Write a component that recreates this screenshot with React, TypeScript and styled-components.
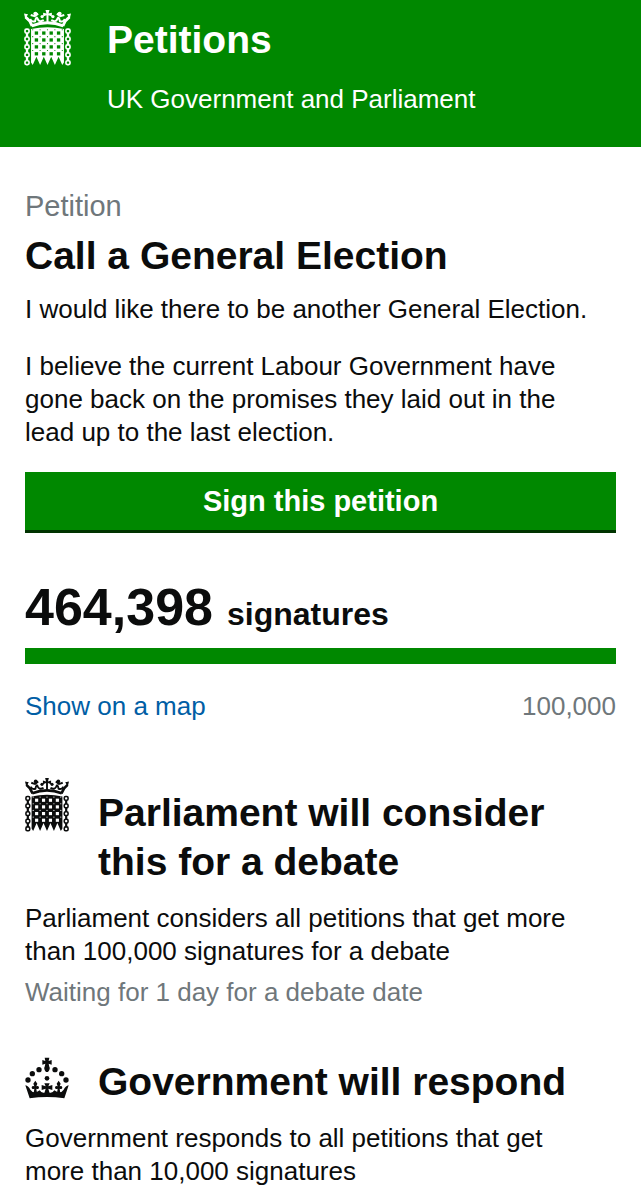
import React from "react";
import styled, { createGlobalStyle } from "styled-components";

const GlobalStyle = createGlobalStyle`
  * {
    box-sizing: border-box;
  }

  body {
    margin: 0;
    background: #fff;
    color: #0b0c0c;
    font-family: "Liberation Sans", Arial, sans-serif;
    font-size: 26px;
    line-height: 33px;
  }

  h1, h2, p {
    margin: 0;
  }
`;

const Header = styled.header`
  display: flex;
  gap: 36px;
  padding: 10px 24px 31px;
  background: #008800;
  color: #fff;
`;

const HeaderTitle = styled.p`
  font-size: 39px;
  font-weight: bold;
  line-height: 60px;
`;

const HeaderSubtitle = styled.p`
  padding-top: 13px;
`;

const Main = styled.main`
  padding: 40px 25px 16px;
`;

const Kicker = styled.p`
  color: #6f777b;
  font-size: 29px;
  line-height: 38px;
`;

const PageTitle = styled.h1`
  font-size: 39px;
  line-height: 62px;
`;

const Text = styled.p<{ $gap?: number }>`
  padding-top: ${({ $gap = 0 }) => $gap}px;
  padding-right: 24px;
`;

const SignButton = styled.button`
  display: block;
  width: 100%;
  margin-top: 23px;
  padding: 12px;
  border: 0;
  border-bottom: 3px solid #003300;
  background: #008800;
  color: #fff;
  font: bold 29px/34px "Liberation Sans", Arial, sans-serif;
  cursor: pointer;
`;

const Count = styled.p`
  padding-top: 43px;
  font-size: 52px;
  font-weight: bold;
  line-height: 62px;
`;

const CountUnit = styled.span`
  margin-left: 14px;
  font-size: 32px;
  line-height: 33px;
`;

const ProgressBar = styled.div`
  height: 16px;
  margin-top: 10px;
  background: #dee0e2;
`;

const ProgressFill = styled.div`
  height: 100%;
  background: #008800;
`;

const CountFooter = styled.div`
  display: flex;
  justify-content: space-between;
  padding-top: 26px;
`;

const MapLink = styled.a`
  color: #005ea5;
  text-decoration: none;
`;

const Muted = styled.p<{ $spaced?: boolean }>`
  padding-top: ${({ $spaced }) => ($spaced ? "8px" : "0")};
  color: #6f777b;
`;

const Threshold = styled.section<{ $gap: number }>`
  padding-top: ${({ $gap }) => $gap}px;
`;

const ThresholdHeading = styled.div`
  display: flex;
  gap: 29px;
  padding-bottom: 16px;
`;

const ThresholdTitle = styled.h2<{ $offset: number }>`
  padding-top: ${({ $offset }) => $offset}px;
  font-size: 39px;
  line-height: 49px;
`;

const Icon = styled.svg`
  display: block;
  flex: none;
`;

const BAR_CENTRES = [69, 91, 113, 135, 157];
const HOLE_COLUMNS = [75, 97, 119, 141];
const HOLE_ROWS = [94, 115, 136, 157];
const LINK_ROWS = [85, 109, 133, 157, 181];

const Portcullis: React.FC<{ width: number; height: number; hole: string }> = ({
  width,
  height,
  hole,
}) => (
  <Icon
    width={width}
    height={height}
    viewBox="43 29 140 170"
    preserveAspectRatio="none"
    fill="currentColor"
    aria-hidden="true"
  >
    {/* crown */}
    <g fill="none" stroke="currentColor">
      <path d="M67 78 Q61 60 47 50M159 78 Q165 60 179 50" strokeWidth="8" />
      <path d="M66 77 Q113 59 160 77" strokeWidth="9" />
      <path
        d="M62 56 Q64 66 76 63 Q80 45 84 57 Q89 67 102 60 M164 56 Q162 66 150 63 Q146 45 142 57 Q137 67 124 60"
        strokeWidth="6"
      />
      <path d="M63 44l12 4 10-8M163 44l-12 4-10-8" strokeWidth="6" />
    </g>
    <path d="M43 40l12 2-8 14zM183 40l-12 2 8 14z" />
    <path d="M110 66V45l-10 4V37l10 3-3-11h12l-3 11 10-3v12l-10-4v21z" />
    {[77, 149].map((x) => (
      <circle key={x} cx={x} cy="40" r="6" />
    ))}
    {[97, 129].map((x) => (
      <circle key={x} cx={x} cy="49" r="5" />
    ))}
    {/* gate */}
    <path d="M64 87 Q113 76 162 87 L162 188 L157 196 L146 171 L135 196 L124 171 L113 196 L102 171 L91 196 L80 171 L69 196 L64 188 Z" />
    {HOLE_ROWS.map((y) =>
      HOLE_COLUMNS.map((x) => (
        <rect key={`${x}-${y}`} x={x} y={y} width="10" height="10" fill={hole} />
      ))
    )}
    {HOLE_ROWS.map((y) =>
      BAR_CENTRES.map((x) => (
        <circle key={`${x}-${y}`} cx={x} cy={y - 5} r="1.8" fill={hole} />
      ))
    )}
    {/* chains */}
    {[52, 174].map((x) =>
      LINK_ROWS.map((y) => (
        <g key={`${x}-${y}`} fill="none" stroke="currentColor">
          <rect x={x - 6} y={y + 2} width="12" height="12" rx="4" strokeWidth="5" />
          {y < 181 && <path d={`M${x} ${y + 14}v12`} strokeWidth="7" />}
        </g>
      ))
    )}
  </Icon>
);

const Crown: React.FC = () => (
  <Icon
    width="44"
    height="42"
    viewBox="44 34 132 126"
    fill="currentColor"
    aria-hidden="true"
  >
    {/* orb and cross */}
    <path d="M103 36h14l-2 10 9-3v14l-9-3 2 9q2 3 1 7-1 5-5 9h-6q-4-4-5-9-1-4 1-7l2-9-9 3V43l9 3z" />
    {/* pearls */}
    <circle cx="86" cy="72" r="8" />
    <circle cx="134" cy="72" r="8" />
    <circle cx="66" cy="84" r="8" />
    <circle cx="154" cy="84" r="8" />
    <circle cx="53" cy="103" r="8" />
    <circle cx="167" cy="103" r="8" />
    <circle cx="110" cy="98" r="7" />
    {/* fleurs and centre cross */}
    {[75, 145].map((x) => (
      <path
        key={x}
        d={`M${x} 105 l6 9 -3 8 q8 -3 8 4 q-1 6 -8 3 l2 14 h-10 l2 -14 q-7 3 -8 -3 q0 -7 8 -4 l-3 -8z`}
      />
    ))}
    <path d="M102 113h16l-4 9 12-4v15l-12-4 4 14h-16l4-14-12 4v-15l12 4z" />
    {/* band */}
    <path d="M45 119q10 2 15 13 5 8 14 8 9-1 14-6 4 7 11 7h22q7 0 11-7 5 5 14 6 9 0 14-8 5-11 15-13l-13 39q-52-8-104 0z" />
  </Icon>
);

const SIGNATURES = 464398;
const TARGET = 100000;

const App: React.FC = () => (
  <>
    <GlobalStyle />
    <Header>
      <Portcullis width={47} height={56} hole="#008800" />
      <div>
        <HeaderTitle>Petitions</HeaderTitle>
        <HeaderSubtitle>UK Government and Parliament</HeaderSubtitle>
      </div>
    </Header>
    <Main>
      <Kicker>Petition</Kicker>
      <PageTitle>Call a General Election</PageTitle>
      <Text $gap={6}>I would like there to be another General Election.</Text>
      <Text $gap={24}>
        I believe the current Labour Government have gone back on the promises
        they laid out in the lead up to the last election.
      </Text>
      <SignButton type="button">Sign this petition</SignButton>
      <Count>
        {SIGNATURES.toLocaleString("en-GB")}
        <CountUnit>signatures</CountUnit>
      </Count>
      <ProgressBar>
        <ProgressFill
          style={{ width: `${Math.min(100, (SIGNATURES / TARGET) * 100)}%` }}
        />
      </ProgressBar>
      <CountFooter>
        <MapLink href="#map">Show on a map</MapLink>
        <Muted>{TARGET.toLocaleString("en-GB")}</Muted>
      </CountFooter>
      <Threshold $gap={55}>
        <ThresholdHeading>
          <Portcullis width={44} height={54} hole="#fff" />
          <ThresholdTitle $offset={10}>
            Parliament will consider this for a debate
          </ThresholdTitle>
        </ThresholdHeading>
        <Text>
          Parliament considers all petitions that get more than 100,000
          signatures for a debate
        </Text>
        <Muted $spaced>Waiting for 1 day for a debate date</Muted>
      </Threshold>
      <Threshold $gap={48}>
        <ThresholdHeading>
          <Crown />
          <ThresholdTitle $offset={0}>Government will respond</ThresholdTitle>
        </ThresholdHeading>
        <Text>
          Government responds to all petitions that get more than 10,000
          signatures
        </Text>
      </Threshold>
    </Main>
  </>
);

export default App;
